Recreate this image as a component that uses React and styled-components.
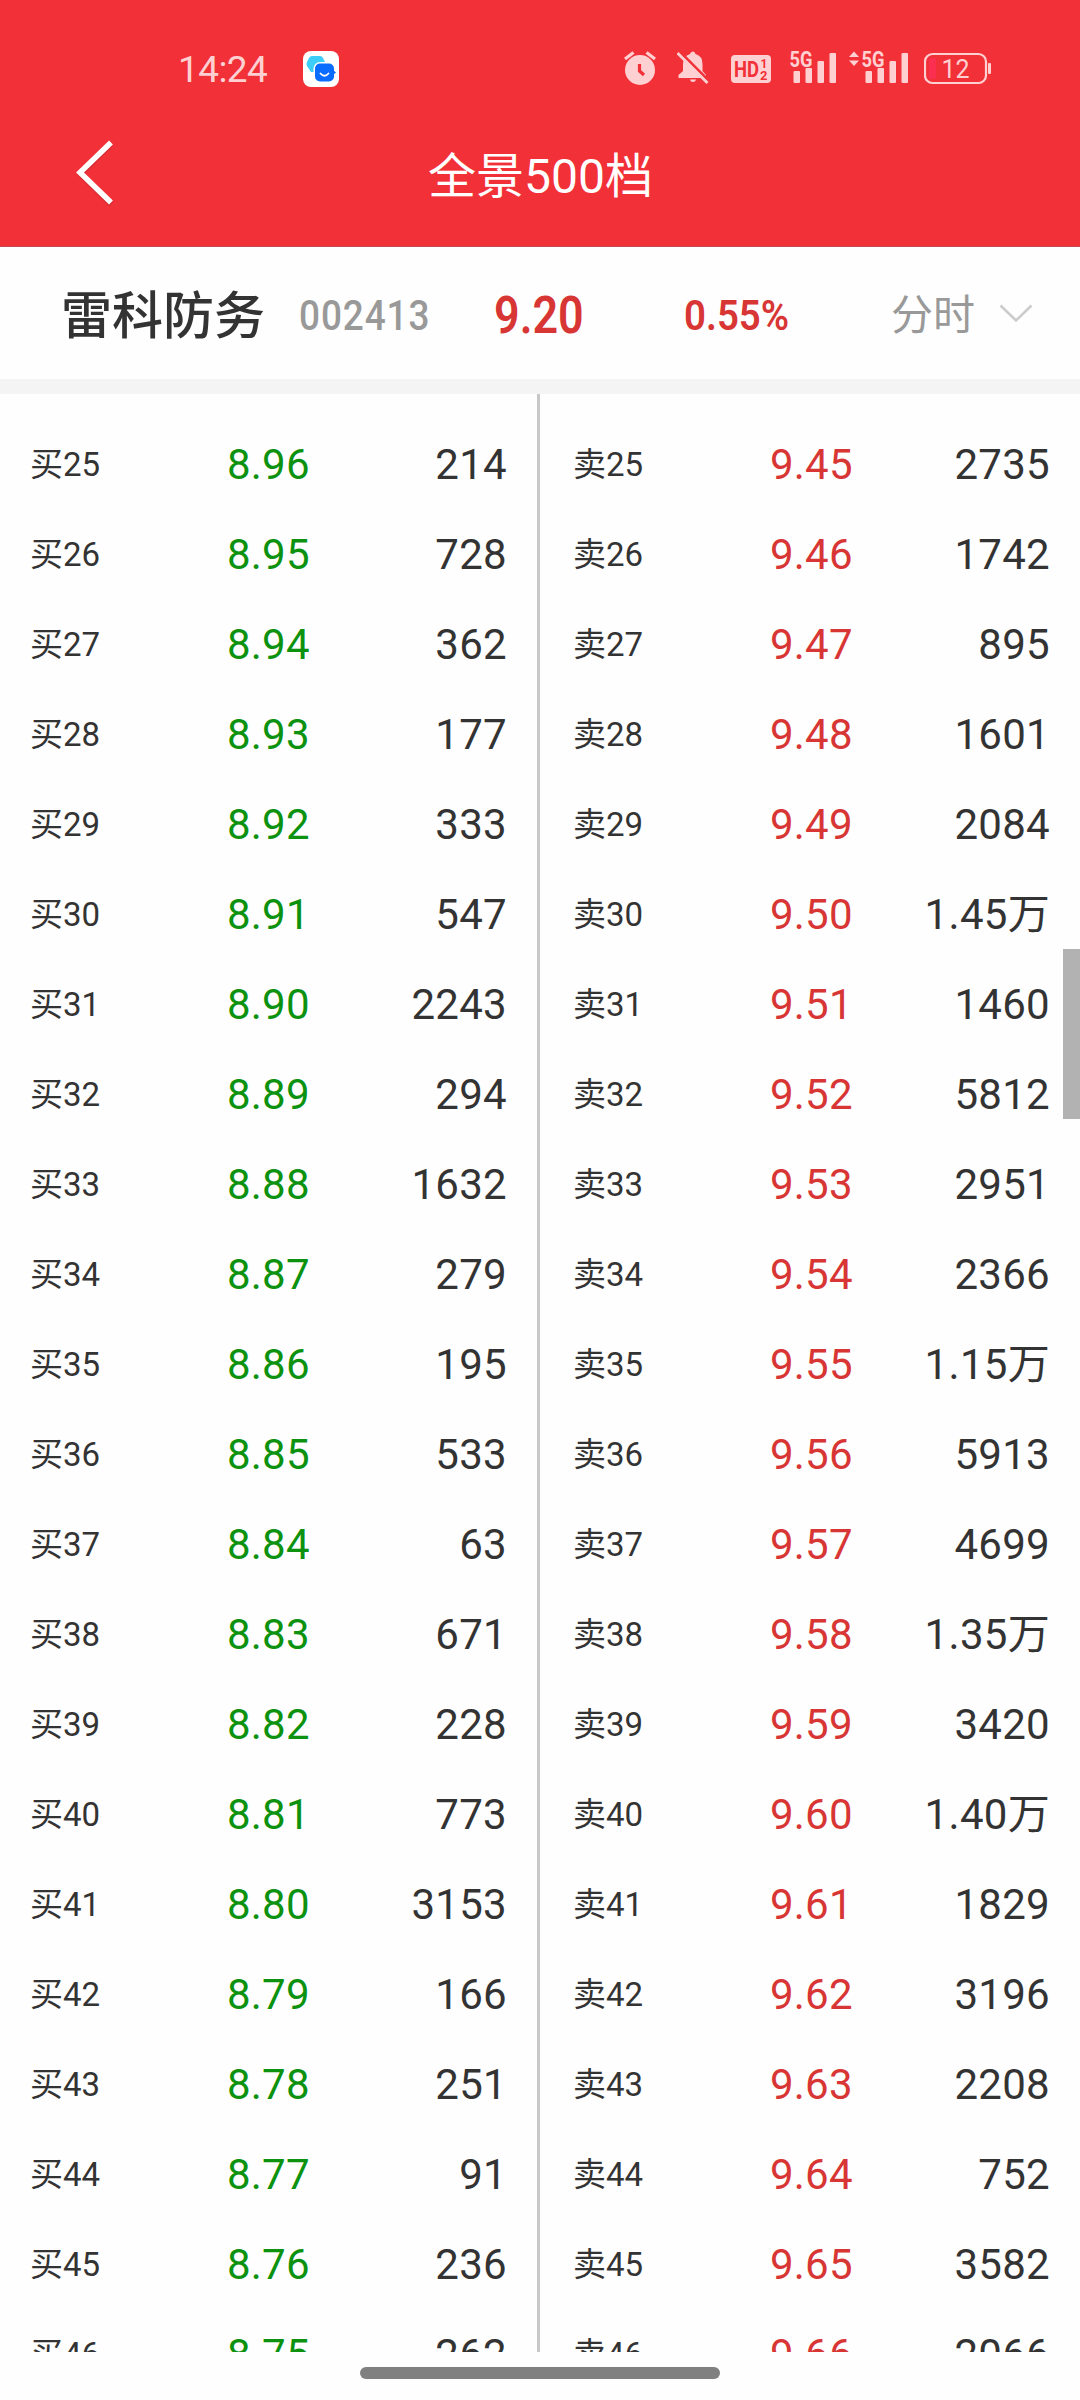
import styled, { createGlobalStyle } from "styled-components";

const GlobalStyle = createGlobalStyle`
  * {
    box-sizing: border-box;
  }
  body {
    margin: 0;
    background-color: #fefefe;
    font-family: Roboto, "Noto Sans CJK SC", sans-serif;
    color: #333;
  }
`;

const Page = styled.div`
  width: 1080px;
  height: 2400px;
  display: flex;
  flex-direction: column;
  overflow: hidden;
`;

const Top = styled.header`
  height: 247px;
  background-color: #f23038;
  border-bottom: 1px solid #c04a50;
`;

const StatusBar = styled.div`
  height: 104px;
  padding: 33px 88px 0 178px;
  display: flex;
  align-items: flex-start;
  color: #ffd0d2;
  svg {
    display: block;
    flex: none;
  }
`;

const Clock = styled.span`
  width: 125px;
  height: 74px;
  line-height: 74px;
  font-size: 37px;
  letter-spacing: -0.6px;
`;

const StatusIcons = styled.div`
  margin-left: auto;
  display: flex;
`;

const TitleBar = styled.div`
  height: 142px;
  padding: 0 72px 0 72px;
  display: grid;
  grid-template-columns: 60px 1fr 60px;
  svg {
    display: block;
    margin-top: 31px;
  }
`;

const Title = styled.h1`
  margin: 0;
  padding-left: 1px;
  font-size: 48px;
  font-weight: 400;
  line-height: 146px;
  text-align: center;
  color: #fff;
`;

const Quote = styled.section`
  height: 147px;
  padding: 5px 48px 0 61px;
  display: flex;
  align-items: center;
  border-bottom: 15px solid #f4f4f4;
`;

const Name = styled.h2`
  margin: 0;
  padding-top: 2px;
  width: 238px;
  flex: none;
  font-size: 51px;
  line-height: 72px;
  font-weight: 500;
`;

const Figure = styled.span`
  width: ${({ $width }) => $width}px;
  flex: none;
  font-size: ${({ $size }) => $size}px;
  font-weight: ${({ $weight }) => $weight};
  line-height: 70px;
  letter-spacing: ${({ $gap }) => $gap || 0}px;
  color: ${({ $color }) => $color};
  white-space: nowrap;
  transform: scaleX(${({ $squeeze }) => $squeeze});
  transform-origin: left center;
`;

const Period = styled.div`
  display: flex;
  align-items: center;
  gap: 24px;
  font-size: 42px;
  line-height: 72px;
  color: #999;
  white-space: nowrap;
  svg {
    flex: none;
    margin-bottom: 4px;
  }
`;

const Book = styled.main`
  height: 1958px;
  display: grid;
  grid-template-columns: 540px 540px;
  overflow: hidden;
  position: relative;
`;

const Side = styled.div`
  padding: 26px 30px 0 ${({ $sell }) => ($sell ? 33 : 30)}px;
  border-right: ${({ $sell }) => ($sell ? "none" : "3px solid #c8c8c8")};
`;

const Row = styled.div`
  height: 90px;
  display: grid;
  grid-template-columns: 197px 130px 1fr;
  line-height: 90px;
`;

const Level = styled.span`
  height: 90px;
  font-size: 33px;
`;

const Price = styled.span`
  height: 90px;
  font-size: 42px;
  letter-spacing: 0.2px;
  color: ${({ $sell }) => ($sell ? "#d83535" : "#0c920f")};
`;

const Volume = styled.span`
  height: 90px;
  font-size: 42px;
  letter-spacing: 0.3px;
  text-align: right;
`;

const ScrollThumb = styled.div`
  position: absolute;
  top: 555px;
  right: 0;
  width: 17px;
  height: 170px;
  background-color: #b2b2b2;
`;

const Gesture = styled.footer`
  height: 48px;
  padding-top: 15px;
  display: flex;
  justify-content: center;
  &::before {
    content: "";
    width: 360px;
    height: 12px;
    border-radius: 6px;
    background-color: #808080;
  }
`;

const buys = [
  "214", "728", "362", "177", "333", "547", "2243", "294", "1632", "279", "195",
  "533", "63", "671", "228", "773", "3153", "166", "251", "91", "236", "262",
];

const sells = [
  "2735", "1742", "895", "1601", "2084", "1.45万", "1460", "5812", "2951", "2366", "1.15万",
  "5913", "4699", "1.35万", "3420", "1.40万", "1829", "3196", "2208", "752", "3582", "2066",
];

const FIRST_LEVEL = 25;

const AppBadge = () => (
  <svg width="36" height="36" viewBox="0 0 36 36" style={{ marginTop: 18 }}>
    <rect width="36" height="36" rx="8" fill="#fff" />
    <path d="M9 5h8q2 0 3 2l2 4-9 10H8l-4-6q-1-2 0-4l2-4q1-2 3-2z" fill="#3ccdf8" />
    <rect x="10.5" y="11" width="22" height="20.5" rx="6.5" fill="#fff" />
    <rect x="12" y="12.5" width="19" height="18" rx="5" fill="#0a6cff" />
    <path d="M30 19l3 2.5-3 2.5z" fill="#0a6cff" />
    <path d="M17.5 22.5q4 4.5 8 0" fill="none" stroke="#fff" strokeWidth="1.8" strokeLinecap="round" />
  </svg>
);

const Alarm = () => (
  <svg width="32" height="72" viewBox="624 33 32 72" fill="none">
    <circle cx="640" cy="70" r="15" fill="#ffd0d2" />
    <path d="M625 59l8.5-6.5M655 59l-8.5-6.5" stroke="#ffd0d2" strokeWidth="3.2" />
    <path d="M639.5 64v7l4.5 4" stroke="#f23038" strokeWidth="3.2" />
  </svg>
);

const Muted = () => (
  <svg width="32" height="72" viewBox="677 33 32 72" fill="none" style={{ marginLeft: 21 }}>
    <path
      d="M693 51.5q2 0 2.5 2.5 7 2 7 10v7l3.5 4v3h-27.5v-3l4.5-4v-7q0-8 7-10 .5-2.5 3-2.5z"
      fill="#ffd0d2"
    />
    <path d="M690 79.5h6q-.5 2.5-3 2.5t-3-2.5z" fill="#ffd0d2" />
    <path d="M679.5 51.5l30 30" stroke="#f23038" strokeWidth="3" />
    <path d="M677.5 53l30 30" stroke="#ffd0d2" strokeWidth="2.8" />
  </svg>
);

const HdVoice = () => (
  <svg width="40" height="72" viewBox="731 33 40 72" style={{ marginLeft: 22 }}>
    <rect x="731" y="55" width="40" height="28" rx="4" fill="#ffd0d2" />
    <g fill="#f23038" fontFamily="Roboto, sans-serif" fontWeight="700">
      <text x="734" y="77" fontSize="22.5" textLength="25" lengthAdjust="spacingAndGlyphs">HD</text>
      <text x="760.5" y="68" fontSize="12">1</text>
      <text x="760" y="80" fontSize="13">2</text>
    </g>
  </svg>
);

// the second SIM also shows the traffic arrows in front of its 5G mark
const Signal = ({ data }) => (
  <svg
    width={data ? 60 : 46}
    height="72"
    viewBox={data ? "-14 33 60 72" : "0 33 46 72"}
    fill="#ffd0d2"
    style={{ marginLeft: data ? 12 : 19 }}
  >
    {data && <path d="M-13 57l5-5.5 5 5.5zM-13 60.5h10l-5 5.5z" />}
    <text x="-.5" y="66.5" fontSize="21.5" fontWeight="700" fontFamily="Roboto, sans-serif" textLength="23" lengthAdjust="spacingAndGlyphs">
      5G
    </text>
    <rect x="3.5" y="71" width="6.5" height="12" rx="1" />
    <rect x="15.5" y="68" width="6.5" height="15" rx="1" />
    <rect x="27.5" y="61" width="6.5" height="22" rx="1" />
    <rect x="39.5" y="53" width="6.5" height="30" rx="1" />
  </svg>
);

const Battery = () => (
  <svg width="68" height="72" viewBox="924 33 68 72" style={{ marginLeft: 16 }}>
    <rect x="929" y="58" width="7" height="21" rx="2" fill="#fb3050" />
    <rect x="925" y="54" width="61" height="29" rx="7.5" fill="none" stroke="#ffd0d2" strokeWidth="2.2" />
    <rect x="988" y="63" width="3" height="11" rx="1" fill="#ffd0d2" />
    <text x="941.5" y="77.5" fontSize="25" fill="#ffd0d2" fontFamily="Roboto, sans-serif">12</text>
  </svg>
);

const BookSide = ({ label, volumes, start, step, sell }) => (
  <Side $sell={sell}>
    {volumes.map((volume, i) => (
      <Row key={i}>
        <Level>
          {label}
          {FIRST_LEVEL + i}
        </Level>
        <Price $sell={sell}>{((start + step * i) / 100).toFixed(2)}</Price>
        <Volume>{volume}</Volume>
      </Row>
    ))}
  </Side>
);

const App = () => {
  return (
    <>
      <GlobalStyle />
      <Page>
        <Top>
          <StatusBar>
            <Clock>14:24</Clock>
            <AppBadge />
            <StatusIcons>
              <Alarm />
              <Muted />
              <HdVoice />
              <Signal />
              <Signal data />
              <Battery />
            </StatusIcons>
          </StatusBar>
          <TitleBar>
            <svg width="44" height="76" viewBox="72 135 44 76" fill="none">
              <path d="M111 144.5L80.5 174.5l30.5 30" stroke="#b5262c" strokeOpacity=".5" strokeWidth="5" />
              <path d="M111 142.5L80 172.5l31 30" stroke="#fff" strokeWidth="5.5" />
            </svg>
            <Title>全景500档</Title>
          </TitleBar>
        </Top>
        <Quote>
          <Name>雷科防务</Name>
          <Figure $width={195} $size={42} $weight={500} $gap={1} $squeeze={0.88} $color="#999">002413</Figure>
          <Figure $width={190} $size={51} $weight={600} $squeeze={0.88} $color="#d83535">9.20</Figure>
          <Figure $width={207} $size={42} $weight={600} $squeeze={0.915} $color="#d83535">0.55%</Figure>
          <Period>
            分时
            <svg width="34" height="20" viewBox="0 0 34 20" fill="none">
              <path d="M1.5 1.5L17 16.5l15.5-15" stroke="#ccc" strokeWidth="2.6" />
            </svg>
          </Period>
        </Quote>
        <Book>
          <BookSide label="买" volumes={buys} start={896} step={-1} />
          <BookSide label="卖" volumes={sells} start={945} step={1} sell />
          <ScrollThumb />
        </Book>
        <Gesture />
      </Page>
    </>
  );
};

export default App;
